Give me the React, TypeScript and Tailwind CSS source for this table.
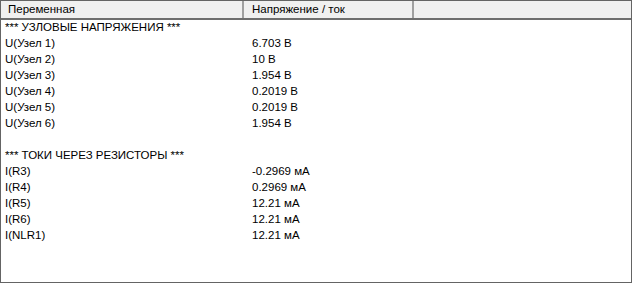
import React from "react";

type Row = { name: string; value: string };

const rows: Row[] = [
  { name: "*** УЗЛОВЫЕ НАПРЯЖЕНИЯ ***", value: "" },
  { name: "U(Узел 1)", value: "6.703 В" },
  { name: "U(Узел 2)", value: "10 В" },
  { name: "U(Узел 3)", value: "1.954 В" },
  { name: "U(Узел 4)", value: "0.2019 В" },
  { name: "U(Узел 5)", value: "0.2019 В" },
  { name: "U(Узел 6)", value: "1.954 В" },
  { name: "", value: "" },
  { name: "*** ТОКИ ЧЕРЕЗ РЕЗИСТОРЫ ***", value: "" },
  { name: "I(R3)", value: "-0.2969 мА" },
  { name: "I(R4)", value: "0.2969 мА" },
  { name: "I(R5)", value: "12.21 мА" },
  { name: "I(R6)", value: "12.21 мА" },
  { name: "I(NLR1)", value: "12.21 мА" },
];

export default function App() {
  return (
    <div
      className="w-[632px] h-[283px] bg-white border border-[#646464] flex flex-col text-[11.5px] text-black overflow-hidden"
      style={{ fontFamily: '"Liberation Sans", Arial, sans-serif' }}
    >
      <div className="flex h-[19px] shrink-0 bg-[#f0f0f0] border-b-2 border-[#6e6e6e] leading-[17px]">
        <div className="w-[243px] pl-[7px] border-r-2 border-[#a0a0a0]">Переменная</div>
        <div className="w-[170px] pl-[8px] border-r-2 border-[#a0a0a0]">Напряжение / ток</div>
        <div className="flex-1" />
      </div>
      <div className="flex flex-col">
        {rows.map((r, i) => (
          <div key={i} className="flex h-[16px] leading-[15px]">
            <div className="w-[245px] pl-[4px] whitespace-nowrap">{r.name}</div>
            <div className="pl-[6px] whitespace-nowrap">{r.value}</div>
          </div>
        ))}
      </div>
    </div>
  );
}
